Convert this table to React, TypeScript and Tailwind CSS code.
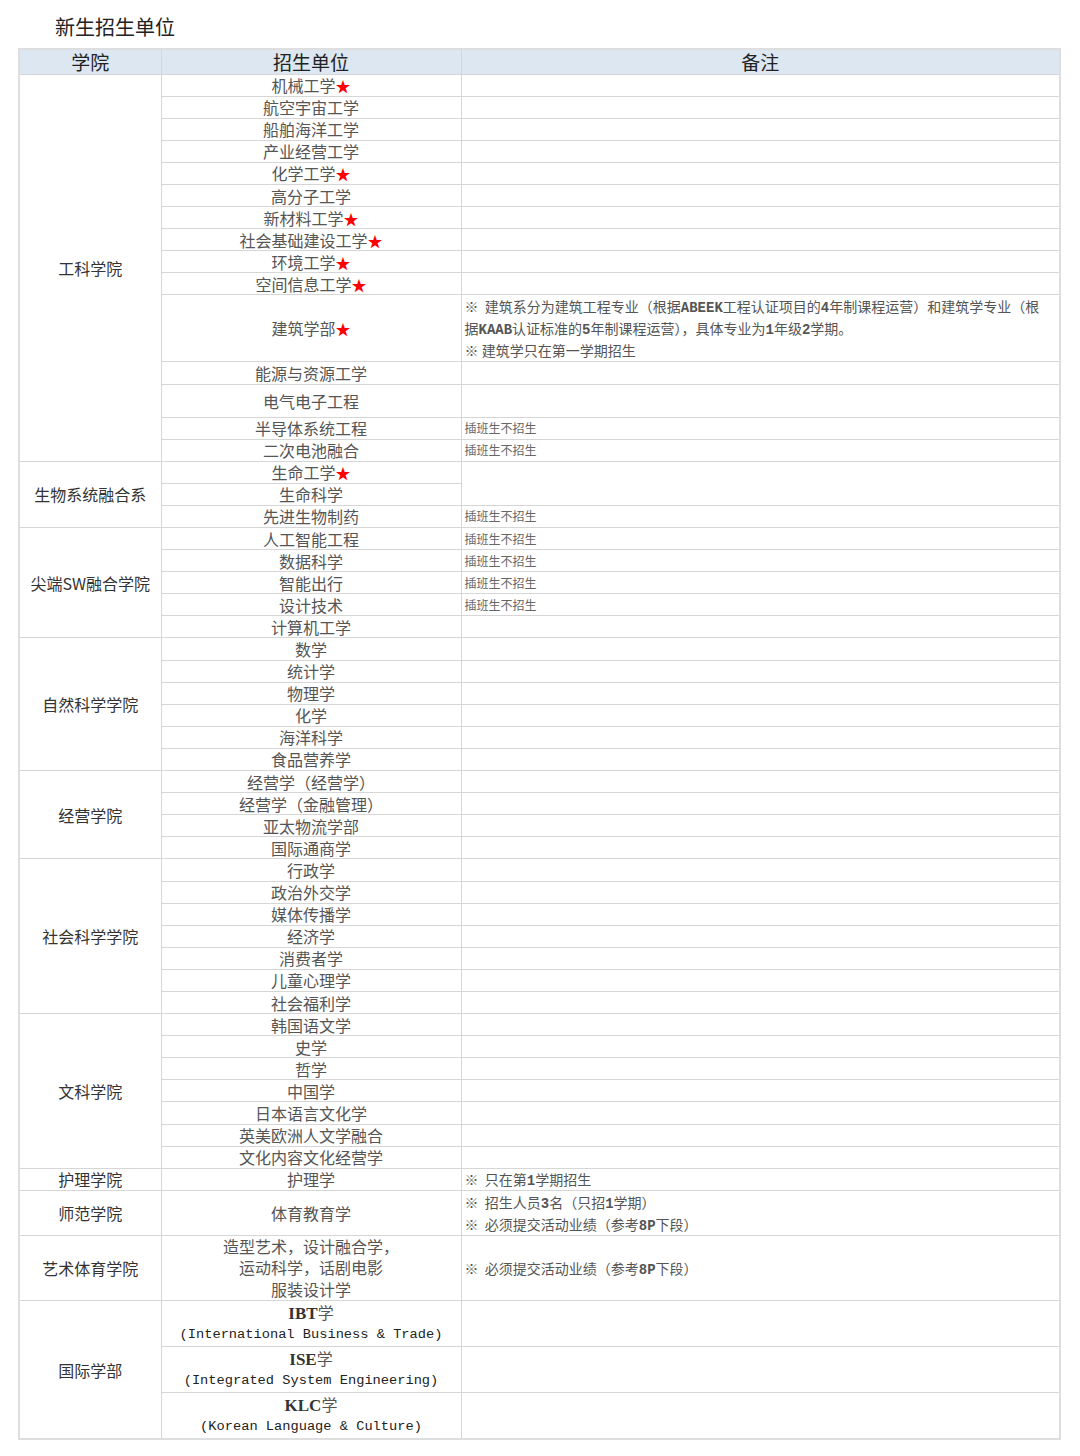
import type { ReactNode } from "react";

type Unit = {
  name: ReactNode;
  star?: boolean;
  note?: ReactNode;
  noteSpan?: number;
  noNote?: boolean;
  h?: string;
};

type College = { name: ReactNode; units: Unit[] };

// bold latin bits inside the notes (slab-ish mono like the source doc)
function B({ children }: { children: ReactNode }) {
  return <span className="font-['Liberation_Mono',monospace] font-bold leading-none">{children}</span>;
}

const NO_TRANSFER = <div className="text-[12px] leading-[16px] text-[#666]">插班生不招生</div>;

function Intl({ code, full }: { code: string; full: string }) {
  return (
    <div className="leading-[22.5px]">
      <div>
        <span className="font-['Liberation_Serif',serif] text-[17px] font-bold leading-none text-[#333]">{code}</span>学
      </div>
      <div className="font-['Liberation_Mono',monospace] text-[13.7px] text-[#222] whitespace-pre">{full}</div>
    </div>
  );
}

const COLLEGES: College[] = [
  {
    name: "工科学院",
    units: [
      { name: "机械工学", star: true },
      { name: "航空宇宙工学" },
      { name: "船舶海洋工学" },
      { name: "产业经营工学" },
      { name: "化学工学", star: true },
      { name: "高分子工学" },
      { name: "新材料工学", star: true },
      { name: "社会基础建设工学", star: true },
      { name: "环境工学", star: true },
      { name: "空间信息工学", star: true },
      {
        name: "建筑学部",
        star: true,
        h: "h-[65px]",
        note: (
          <div className="text-[14px] leading-[22px] text-[#555] whitespace-nowrap">
            <div>
              ※&nbsp;&nbsp;建筑系分为建筑工程专业（根据<B>ABEEK</B>工程认证项目的<B>4</B>年制课程运营）和建筑学专业（根
            </div>
            <div>
              据<B>KAAB</B>认证标准的<B>5</B>年制课程运营），具体专业为<B>1</B>年级<B>2</B>学期。
            </div>
            <div>※ 建筑学只在第一学期招生</div>
          </div>
        ),
      },
      { name: "能源与资源工学" },
      { name: "电气电子工程", h: "h-[33px]" },
      { name: "半导体系统工程", note: NO_TRANSFER },
      { name: "二次电池融合", note: NO_TRANSFER },
    ],
  },
  {
    name: "生物系统融合系",
    units: [
      { name: "生命工学", star: true, noteSpan: 2 },
      { name: "生命科学", noNote: true },
      { name: "先进生物制药", note: NO_TRANSFER },
    ],
  },
  {
    name: "尖端SW融合学院",
    units: [
      { name: "人工智能工程", note: NO_TRANSFER },
      { name: "数据科学", note: NO_TRANSFER },
      { name: "智能出行", note: NO_TRANSFER },
      { name: "设计技术", note: NO_TRANSFER },
      { name: "计算机工学" },
    ],
  },
  {
    name: "自然科学学院",
    units: [
      { name: "数学" },
      { name: "统计学" },
      { name: "物理学" },
      { name: "化学" },
      { name: "海洋科学" },
      { name: "食品营养学" },
    ],
  },
  {
    name: "经营学院",
    units: [
      { name: "经营学（经营学）" },
      { name: "经营学（金融管理）" },
      { name: "亚太物流学部" },
      { name: "国际通商学" },
    ],
  },
  {
    name: "社会科学学院",
    units: [
      { name: "行政学" },
      { name: "政治外交学" },
      { name: "媒体传播学" },
      { name: "经济学" },
      { name: "消费者学" },
      { name: "儿童心理学" },
      { name: "社会福利学" },
    ],
  },
  {
    name: "文科学院",
    units: [
      { name: "韩国语文学" },
      { name: "史学" },
      { name: "哲学" },
      { name: "中国学" },
      { name: "日本语言文化学" },
      { name: "英美欧洲人文学融合" },
      { name: "文化内容文化经营学" },
    ],
  },
  {
    name: "护理学院",
    units: [
      {
        name: "护理学",
        note: (
          <div className="text-[14px] leading-[20px] text-[#555]">
            ※&nbsp;&nbsp;只在第<B>1</B>学期招生
          </div>
        ),
      },
    ],
  },
  {
    name: "师范学院",
    units: [
      {
        name: "体育教育学",
        h: "h-[44px]",
        note: (
          <div className="text-[14px] leading-[22px] text-[#555]">
            <div>
              ※&nbsp;&nbsp;招生人员<B>3</B>名（只招<B>1</B>学期）
            </div>
            <div>
              ※&nbsp;&nbsp;必须提交活动业绩（参考<B>8P</B>下段）
            </div>
          </div>
        ),
      },
    ],
  },
  {
    name: "艺术体育学院",
    units: [
      {
        name: (
          <div className="leading-[21.5px]">
            <div>造型艺术，设计融合学，</div>
            <div>运动科学，话剧电影</div>
            <div>服装设计学</div>
          </div>
        ),
        h: "h-[64px]",
        note: (
          <div className="text-[14px] leading-[20px] text-[#555]">
            ※&nbsp;&nbsp;必须提交活动业绩（参考<B>8P</B>下段）
          </div>
        ),
      },
    ],
  },
  {
    name: "国际学部",
    units: [
      { name: <Intl code="IBT" full="(International Business & Trade)" />, h: "h-[46px]" },
      { name: <Intl code="ISE" full="(Integrated System Engineering)" />, h: "h-[46px]" },
      { name: <Intl code="KLC" full="(Korean Language & Culture)" />, h: "h-[46px]" },
    ],
  },
];

export default function App() {
  return (
    <div className="bg-white min-h-[1456px] font-['Noto_Sans_CJK_SC',sans-serif]">
      <div className="h-[48px] pt-[6px] pl-[55px] flex items-center text-[20px] text-[#222]">新生招生单位</div>

      <table className="ml-[18px] w-[1041px] table-fixed border-collapse border-2 border-[#dedede] text-[16px]">
        <colgroup>
          <col className="w-[142px]" />
          <col className="w-[300px]" />
          <col className="w-[599px]" />
        </colgroup>
        <thead>
          <tr className="h-[25px] bg-[#dde7f2] text-[19px] text-[#222]">
            <th className="font-normal border border-[#d6d6d6] p-0 leading-[22px]">学院</th>
            <th className="font-normal border border-[#d6d6d6] p-0 leading-[22px]">招生单位</th>
            <th className="font-normal border border-[#d6d6d6] p-0 leading-[22px]">备注</th>
          </tr>
        </thead>
        <tbody>
          {COLLEGES.map((c, ci) =>
            c.units.map((u, i) => (
              <tr key={`${ci}-${i}`} className={u.h ?? "h-[22.1px]"}>
                {i === 0 && (
                  <td
                    rowSpan={c.units.length}
                    className="border border-[#d6d6d6] p-0 text-center align-middle text-[16px] leading-[20px] text-[#333]"
                  >
                    {c.name}
                  </td>
                )}
                <td className="border border-[#d6d6d6] p-0 text-center align-middle text-[16px] leading-[20px] text-[#555]">
                  {u.name}
                  {u.star && <span className="text-[#ff0000] text-[15px] leading-none">★</span>}
                </td>
                {!u.noNote && (
                  <td
                    rowSpan={u.noteSpan ?? 1}
                    className="border border-[#d6d6d6] py-0 pl-[3px] pr-0 text-left align-middle leading-[16px]"
                  >
                    {u.note}
                  </td>
                )}
              </tr>
            ))
          )}
        </tbody>
      </table>
    </div>
  );
}
